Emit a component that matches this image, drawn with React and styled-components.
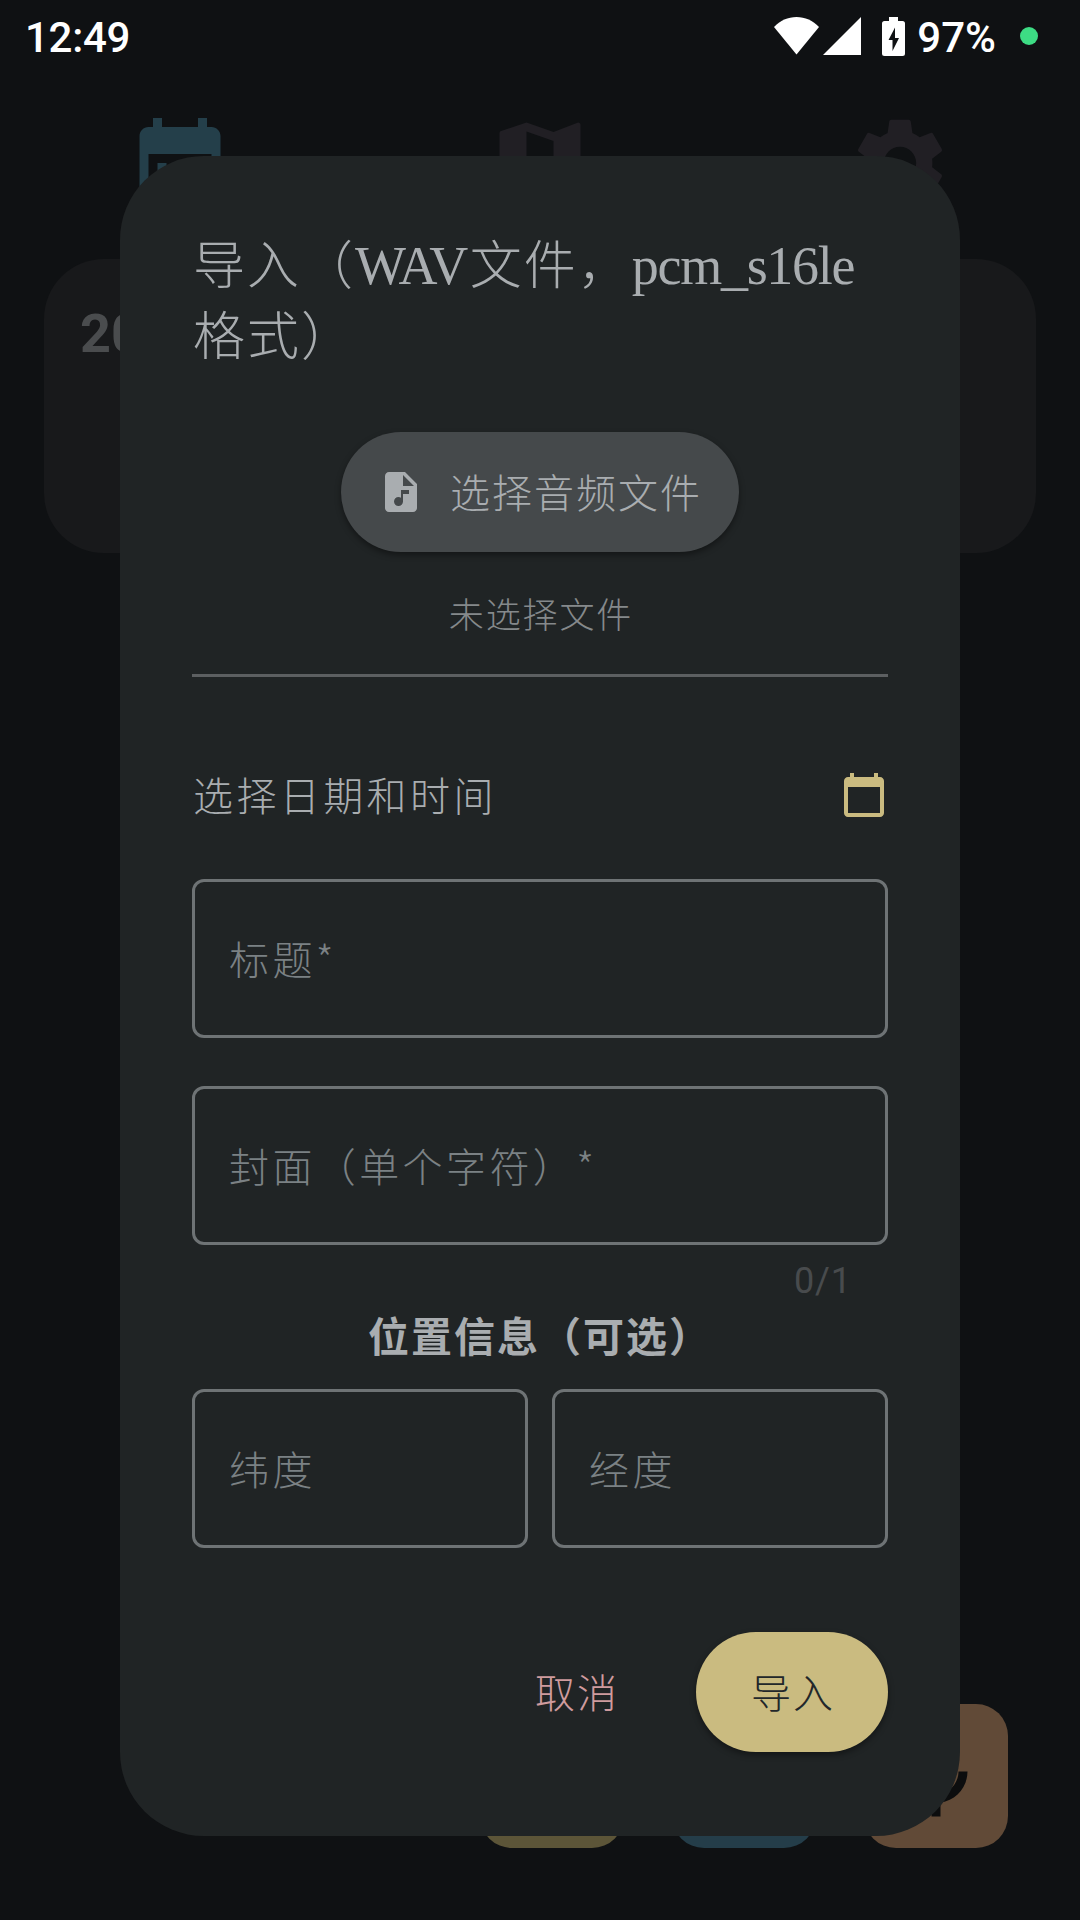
import { useState } from "react";
import styled, { createGlobalStyle } from "styled-components";
import {
  MdAudioFile,
  MdCalendarMonth,
  MdCalendarToday,
  MdMap,
  MdSettings,
} from "react-icons/md";

const GlobalStyle = createGlobalStyle`
  * {
    box-sizing: border-box;
  }
  body {
    margin: 0;
    background: #0f1113;
  }
  button,
  input {
    font: inherit;
    border: 0;
    padding: 0;
    background: none;
  }
`;

const Screen = styled.div`
  position: relative;
  display: flex;
  flex-direction: column;
  width: 1080px;
  height: 1920px;
  overflow: hidden;
  background: #0f1113;
  font-family: Roboto, "Noto Sans CJK SC", sans-serif;
`;

const StatusBar = styled.header`
  display: flex;
  align-items: center;
  height: 72px;
  padding: 0 42px 0 25px;
  color: #fff;
  font-size: 42px;
  font-weight: 500;
  line-height: 72px;

  svg {
    display: block;
    fill: currentColor;
  }
`;

const Clock = styled.span`
  flex: 1;
  padding-top: 3px;
  letter-spacing: -0.3px;
`;

const StatusIcons = styled.div`
  display: flex;
  align-items: center;
  height: 72px;

  .signal {
    margin-left: 4px;
  }
  .battery {
    margin-left: 21px;
    margin-right: 12px;
  }
`;

const BatteryLevel = styled.span`
  padding-top: 3px;
`;

const PrivacyDot = styled.span`
  width: 18px;
  height: 18px;
  margin-left: 24px;
  border-radius: 50%;
  background: #3ddc84;
`;

const Tabs = styled.nav`
  display: grid;
  grid-template-columns: repeat(3, 1fr);
  justify-items: center;
  padding-top: 37px;
`;

const Tab = styled.span`
  height: 108px;
  font-size: 108px;
  color: ${(props) => (props.$active ? "#243f4a" : "#211f24")};

  svg {
    display: block;
  }
`;

const DayCard = styled.section`
  height: 294px;
  margin: 42px 44px 0;
  padding: 43px 36px;
  border-radius: 60px;
  background: #18191b;
  color: #4a4c4e;
  font-size: 54px;
  font-weight: 700;
  line-height: 64px;
`;

const Fabs = styled.div`
  display: flex;
  justify-content: flex-end;
  gap: 48px;
  margin-top: auto;
  padding: 0 72px 72px 0;
`;

const Fab = styled.div`
  display: flex;
  align-items: center;
  justify-content: center;
  width: 144px;
  height: 144px;
  border-radius: 32px;
  background: ${(props) => props.$color};
`;

const Overlay = styled.div`
  position: absolute;
  inset: 0;
  display: flex;
  justify-content: center;
  align-items: flex-start;
  padding-top: 156px;
`;

const Dialog = styled.form`
  display: flex;
  flex-direction: column;
  width: 840px;
  height: 1680px;
  padding: 70px 72px 72px;
  border-radius: 84px;
  background: #202425;
  color: #a9adb0;
  font-family: "Noto Sans CJK SC", sans-serif;
  font-size: 40px;
  font-weight: 300;
  letter-spacing: 2px;
`;

const Title = styled.h1`
  margin: 0;
  height: 142px;
  padding-left: 1px;
  font-size: 52px;
  font-weight: 300;
  line-height: 71px;
  white-space: nowrap;
`;

const Latin = styled.span`
  margin-right: ${(props) => props.$gap || "0"};
  font-family: "Liberation Serif", serif;
  font-size: 54px;
  font-weight: 400;
  line-height: 1;
  letter-spacing: ${(props) => props.$spacing || "0"};
`;

const PickButton = styled.button`
  display: flex;
  align-items: center;
  align-self: center;
  gap: 25px;
  width: 398px;
  height: 120px;
  margin-top: 64px;
  padding: 0 36px;
  border-radius: 60px;
  background: #45494b;
  color: inherit;
  letter-spacing: 2px;
  white-space: nowrap;
  box-shadow: 0 3px 6px rgba(0, 0, 0, 0.4);

  svg {
    flex: none;
  }
`;

const Label = styled.span`
  height: 60px;
  margin-top: -3px;
  line-height: 60px;
`;

const FileName = styled.p`
  height: 54px;
  margin: 34px 0 0;
  padding-left: 2px;
  color: #85898b;
  font-size: 35px;
  line-height: 54px;
  letter-spacing: 1.9px;
  text-align: center;
`;

const Divider = styled.hr`
  width: 100%;
  height: 3px;
  margin: 34px 0 0;
  border: 0;
  background: #5c5f61;
`;

const DateRow = styled.div`
  display: flex;
  align-items: center;
  justify-content: space-between;
  height: 60px;
  margin-top: 88px;
  padding-left: 1px;
  letter-spacing: 3.4px;

  svg {
    color: #cabb80;
  }
`;

const Field = styled.input`
  display: block;
  width: 100%;
  height: 159px;
  padding: 0 34px 2px;
  border: 3px solid #6e7375;
  border-radius: 12px;
  outline: none;
  color: #a9adb0;
  letter-spacing: 3.4px;

  &::placeholder {
    color: #7b8184;
    opacity: 1;
  }
`;

const TitleField = styled(Field)`
  margin-top: 54px;
`;

const CoverField = styled(Field)`
  margin-top: 48px;
`;

const Counter = styled.div`
  height: 48px;
  margin-top: 12px;
  padding-right: 36px;
  color: #484b4d;
  font-family: Roboto, sans-serif;
  font-size: 36px;
  font-weight: 400;
  line-height: 48px;
  letter-spacing: 0.9px;
  text-align: right;
`;

const SectionTitle = styled.h2`
  height: 60px;
  margin: -1px 0 0;
  font-size: 41px;
  font-weight: 700;
  line-height: 60px;
  letter-spacing: 2px;
  text-align: center;
`;

const Coordinates = styled.div`
  display: grid;
  grid-template-columns: 1fr 1fr;
  gap: 24px;
  margin-top: 25px;
`;

const Actions = styled.div`
  display: flex;
  justify-content: flex-end;
  gap: 36px;
  margin-top: 84px;
`;

const ActionButton = styled.button`
  height: 120px;
  width: ${(props) => (props.$filled ? "192px" : "168px")};
  padding: 0 0 3px 2px;
  border-radius: 60px;
  line-height: 60px;
  letter-spacing: 2px;
  color: ${(props) => (props.$filled ? "#22272a" : "#cf9b9e")};
  background: ${(props) => (props.$filled ? "#cabb80" : "transparent")};
  box-shadow: ${(props) =>
    props.$filled ? "0 3px 6px rgba(0, 0, 0, 0.4)" : "none"};
`;

const WifiIcon = () => (
  <svg width="45" height="38" viewBox="0 0 45 38">
    <path d="M22.5 37.5 0 10C6 3.5 14 0 22.5 0S39 3.5 45 10z" />
  </svg>
);

const SignalIcon = () => (
  <svg className="signal" width="38" height="38" viewBox="0 0 38 38">
    <path d="M38 0v38H0z" />
  </svg>
);

const BatteryIcon = () => (
  <svg className="battery" width="23" height="39" viewBox="0 0 23 39">
    <path
      fillRule="evenodd"
      d="M7 0h9v4h4.500a2.500 2.500 0 0 1 2.500 2.500v30a2.500 2.500 0 0 1-2.500 2.500h-18a2.500 2.500 0 0 1-2.500-2.500v-30a2.500 2.500 0 0 1 2.500-2.500h4.500zM13 10.500 6.500 23h4v11l6.500-13h-4z"
    />
  </svg>
);

const MicIcon = () => (
  <svg width="108" height="108" viewBox="0 0 24 24" fill="#0c0d0e">
    <path d="M12 14c1.660 0 3-1.340 3-3V5c0-1.660-1.340-3-3-3S9 3.340 9 5v6c0 1.660 1.340 3 3 3z" />
    <path d="M17 11c0 2.760-2.240 5-5 5s-5-2.240-5-5H5c0 3.530 2.610 6.430 6 6.920V21h2v-3.080c3.390-.49 6-3.390 6-6.920h-2z" />
  </svg>
);

const ImportDialog = () => {
  const [title, setTitle] = useState("");
  const [cover, setCover] = useState("");
  const [latitude, setLatitude] = useState("");
  const [longitude, setLongitude] = useState("");

  return (
    <Overlay>
      <Dialog onSubmit={(e) => e.preventDefault()}>
        <Title>
          导入（
          <Latin $spacing="-1.4px" $gap="3px">
            WAV
          </Latin>
          文件，
          <Latin $spacing="-1.3px">pcm_s16le</Latin>
          <br />
          格式）
        </Title>
        <PickButton type="button">
          <MdAudioFile size={48} />
          <Label>选择音频文件</Label>
        </PickButton>
        <FileName>未选择文件</FileName>
        <Divider />
        <DateRow>
          <Label>选择日期和时间</Label>
          <MdCalendarToday size={48} />
        </DateRow>
        <TitleField
          placeholder="标题*"
          value={title}
          onChange={(e) => setTitle(e.target.value)}
        />
        <CoverField
          placeholder="封面（单个字符）*"
          maxLength={1}
          value={cover}
          onChange={(e) => setCover(e.target.value)}
        />
        <Counter>{cover.length}/1</Counter>
        <SectionTitle>位置信息（可选）</SectionTitle>
        <Coordinates>
          <Field
            placeholder="纬度"
            value={latitude}
            onChange={(e) => setLatitude(e.target.value)}
          />
          <Field
            placeholder="经度"
            value={longitude}
            onChange={(e) => setLongitude(e.target.value)}
          />
        </Coordinates>
        <Actions>
          <ActionButton type="button">取消</ActionButton>
          <ActionButton type="submit" $filled>
            导入
          </ActionButton>
        </Actions>
      </Dialog>
    </Overlay>
  );
};

const App = () => {
  return (
    <Screen>
      <GlobalStyle />
      <StatusBar>
        <Clock>12:49</Clock>
        <StatusIcons>
          <WifiIcon />
          <SignalIcon />
          <BatteryIcon />
          <BatteryLevel>97%</BatteryLevel>
          <PrivacyDot />
        </StatusIcons>
      </StatusBar>
      <Tabs>
        <Tab $active>
          <MdCalendarMonth />
        </Tab>
        <Tab>
          <MdMap />
        </Tab>
        <Tab>
          <MdSettings />
        </Tab>
      </Tabs>
      <DayCard>20</DayCard>
      <Fabs>
        <Fab $color="#5c5538" />
        <Fab $color="#243d49" />
        <Fab $color="#614a37">
          <MicIcon />
        </Fab>
      </Fabs>
      <ImportDialog />
    </Screen>
  );
};

export default App;
